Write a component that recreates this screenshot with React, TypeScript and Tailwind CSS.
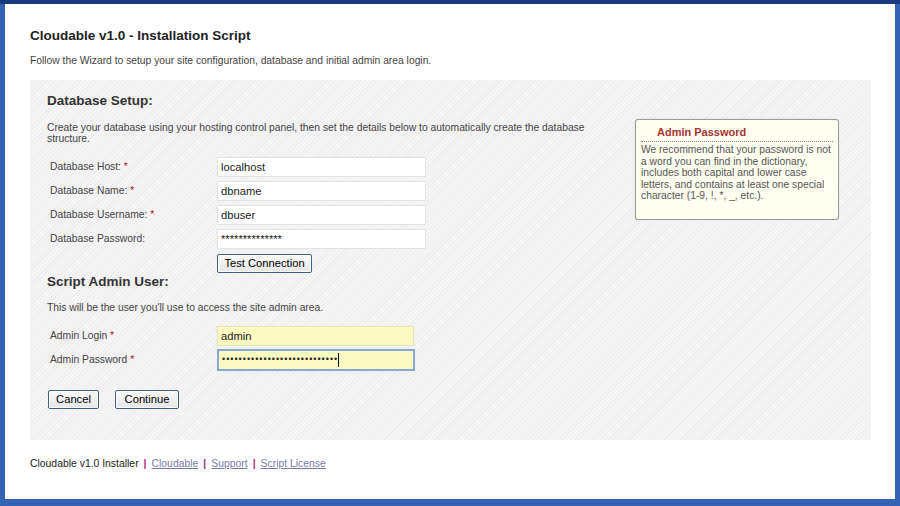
import React from 'react'

const dbFields = [
  { label: 'Database Host:', required: true, value: 'localhost' },
  { label: 'Database Name:', required: true, value: 'dbname' },
  { label: 'Database Username:', required: true, value: 'dbuser' },
  { label: 'Database Password:', required: false, value: '**************' },
]

const Btn = ({ children, className = '' }: { children: React.ReactNode; className?: string }) => (
  <button
    className={`h-[19px] border border-[#3f5f86] rounded-[2px] bg-[linear-gradient(#fafafa,#e6e6e6)] text-[11.2px] leading-none text-black shadow-[inset_0_0_0_1px_#fff] ${className}`}
  >
    {children}
  </button>
)

const App = () => {
  return (
    <div className="w-[900px] h-[506px] bg-[#3564b4] pl-[5px] pr-[5px] pb-[7px] border-t-[4px] border-t-[#1b3a82] font-['Liberation_Sans',Arial,sans-serif]">
      <div className="h-full bg-white pl-[25px] pr-[24px] pt-[24px] flex flex-col">
        <h1 className="text-[13.5px] font-bold text-[#222] leading-[16px]">Cloudable v1.0 - Installation Script</h1>
        <p className="mt-[10px] text-[10.3px] text-[#444] leading-[13px]">
          Follow the Wizard to setup your site configuration, database and initial admin area login.
        </p>

        <div className="mt-[13px] h-[360px] flex bg-[repeating-linear-gradient(135deg,#ececec_0px,#ececec_1px,#f5f5f5_1px,#f5f5f5_3px)] pl-[17px]">
          <div className="w-[560px] pt-[12px]">
            <h2 className="text-[13.5px] font-bold text-[#333] leading-[17px]">Database Setup:</h2>
            <p className="mt-[13px] text-[10.3px] text-[#444] leading-[11px]">
              Create your database using your hosting control panel, then set the details below to automatically create the database structure.
            </p>

            <div className="mt-[13px] flex flex-col gap-[4px]">
              {dbFields.map((f) => (
                <div key={f.label} className="flex items-center h-[20px]">
                  <span className="w-[170px] pl-[3px] text-[10.3px] text-[#444]">
                    {f.label} {f.required && <span className="text-[#a02020]">*</span>}
                  </span>
                  <div className="w-[209px] h-[20px] bg-white border border-[#e2e2e2] px-[3px] flex items-center text-[11.2px] text-[#222]">
                    {f.value}
                  </div>
                </div>
              ))}
            </div>

            <div className="mt-[1px] pl-[170px]">
              <Btn className="w-[95px]">Test Connection</Btn>
            </div>

            <h2 className="text-[13.5px] font-bold text-[#333] leading-[15px]">Script Admin User:</h2>
            <p className="mt-[12px] text-[10.3px] text-[#444] leading-[13px]">
              This will be the user you'll use to access the site admin area.
            </p>

            <div className="mt-[12px] flex flex-col gap-[4px]">
              <div className="flex items-center h-[20px]">
                <span className="w-[170px] pl-[3px] text-[10.3px] text-[#444]">
                  Admin Login <span className="text-[#a02020]">*</span>
                </span>
                <div className="w-[197px] h-[20px] bg-[#fbfbc2] border border-[#e4e4b4] px-[3px] flex items-center text-[11.2px] text-[#222]">
                  admin
                </div>
              </div>
              <div className="flex items-center h-[20px]">
                <span className="w-[170px] pl-[3px] text-[10.3px] text-[#444]">
                  Admin Password <span className="text-[#a02020]">*</span>
                </span>
                <div className="w-[198px] h-[22px] bg-[#fbfbc2] border-2 border-[#86a9d6] px-[3px] flex items-center text-[9px] text-[#222] tracking-[1px]">
                  ••••••••••••••••••••••••••••
                  <span className="w-px h-[14px] bg-black" />
                </div>
              </div>
            </div>

            <div className="mt-[20px] flex gap-[16px] pl-[1px]">
              <Btn className="w-[51px]">Cancel</Btn>
              <Btn className="w-[64px]">Continue</Btn>
            </div>
          </div>

          <div className="ml-auto mr-[32px] mt-[39px] w-[204px] h-[101px] bg-[#fffff2] border border-[#9a9a9a] rounded-[3px] px-[5px] pt-[5px] shadow-[0_0_1px_#bbb]">
            <div className="pl-[16px] text-[11px] font-bold text-[#a83232] leading-[14px]">Admin Password</div>
            <div className="mt-[2px] border-t border-dotted border-[#888]" />
            <p className="mt-[2px] text-[10.3px] text-[#555] leading-[11.6px]">
              We recommend that your password is not a word you can find in the dictionary, includes both capital and lower case letters, and contains at least one special character (1-9, !, *, _, etc.).
            </p>
          </div>
        </div>

        <div className="mt-[16px] text-[10.4px] text-[#222] flex items-center">
          <span>Cloudable v1.0 Installer</span>
          <span className="mx-[5px] text-[#a0307a] font-bold">|</span>
          <a className="underline text-[#7a7aa6]">Cloudable</a>
          <span className="mx-[5px] text-[#a0307a] font-bold">|</span>
          <a className="underline text-[#7a7aa6]">Support</a>
          <span className="mx-[5px] text-[#a0307a] font-bold">|</span>
          <a className="underline text-[#7a7aa6]">Script License</a>
        </div>
      </div>
    </div>
  )
}

export default App
